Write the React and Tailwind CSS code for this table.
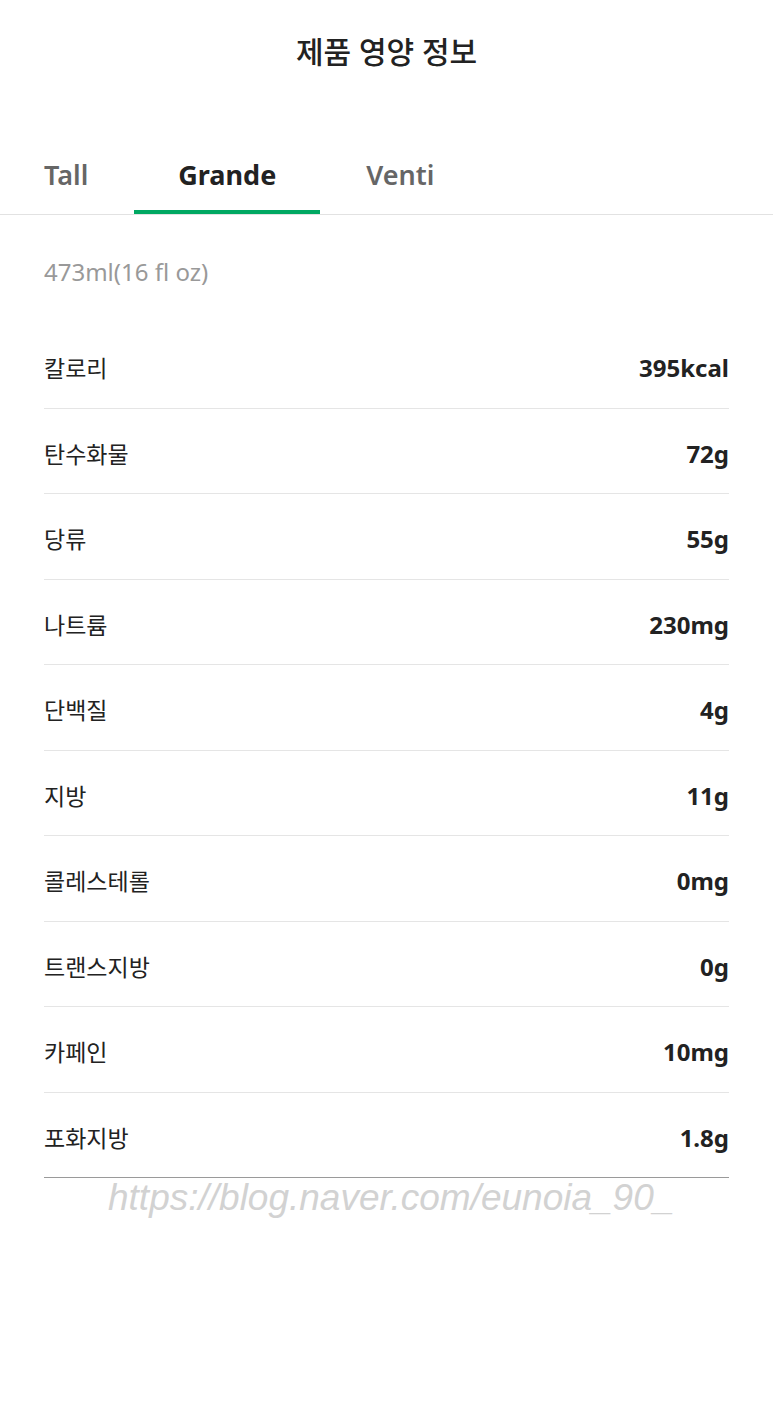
import React, { useState } from 'react';

const sizes = [
  { name: 'Tall', volume: '355ml(12 fl oz)' },
  { name: 'Grande', volume: '473ml(16 fl oz)' },
  { name: 'Venti', volume: '591ml(20 fl oz)' },
];

const nutrition = [
  ['칼로리', '395kcal'],
  ['탄수화물', '72g'],
  ['당류', '55g'],
  ['나트륨', '230mg'],
  ['단백질', '4g'],
  ['지방', '11g'],
  ['콜레스테롤', '0mg'],
  ['트랜스지방', '0g'],
  ['카페인', '10mg'],
  ['포화지방', '1.8g'],
];

const App = () => {
  const [active, setActive] = useState(1);

  return (
    <div
      className="min-h-[1406px] w-full bg-white text-[#222]"
      style={{ fontFamily: '"Noto Sans", "Noto Sans CJK KR", sans-serif' }}
    >
      <header className="flex h-[104px] items-center justify-center">
        <h1 className="text-[30px] font-medium leading-none">제품 영양 정보</h1>
      </header>

      <nav className="mt-[31px] flex gap-[2px] border-b border-[#e2e2e2]">
        {sizes.map((s, i) => (
          <button
            key={s.name}
            onClick={() => setActive(i)}
            className={
              i === active
                ? 'flex h-[79px] items-center border-b-4 border-[#00a862] px-[44px] pt-[6px] text-[27px] font-bold text-[#222]'
                : 'flex h-[79px] items-center border-b-4 border-transparent px-[44px] pt-[6px] text-[27px] font-semibold text-[#666]'
            }
          >
            {s.name}
          </button>
        ))}
      </nav>

      <div className="px-[44px]">
        <p className="pt-[45px] text-[24px] leading-[24px] text-[#999]">{sizes[active].volume}</p>

        <ul className="mt-[39px]">
          {nutrition.map(([label, value], i) => (
            <li
              key={label}
              className={
                i === nutrition.length - 1
                  ? 'flex h-[85.5px] items-center justify-between border-b border-[#9a9a9a] pt-[6px]'
                  : 'flex h-[85.5px] items-center justify-between border-b border-[#e5e5e5] pt-[6px]'
              }
            >
              <span className="text-[23px]">{label}</span>
              <span className="text-[24px] font-bold">{value}</span>
            </li>
          ))}
        </ul>

        <p
          className="pl-[64px] text-[37px] italic leading-[40px] text-[#d2d2d2]"
          style={{ fontFamily: '"Liberation Sans", sans-serif' }}
        >
          https://blog.naver.com/eunoia_90_
        </p>
      </div>
    </div>
  );
};

export default App;
